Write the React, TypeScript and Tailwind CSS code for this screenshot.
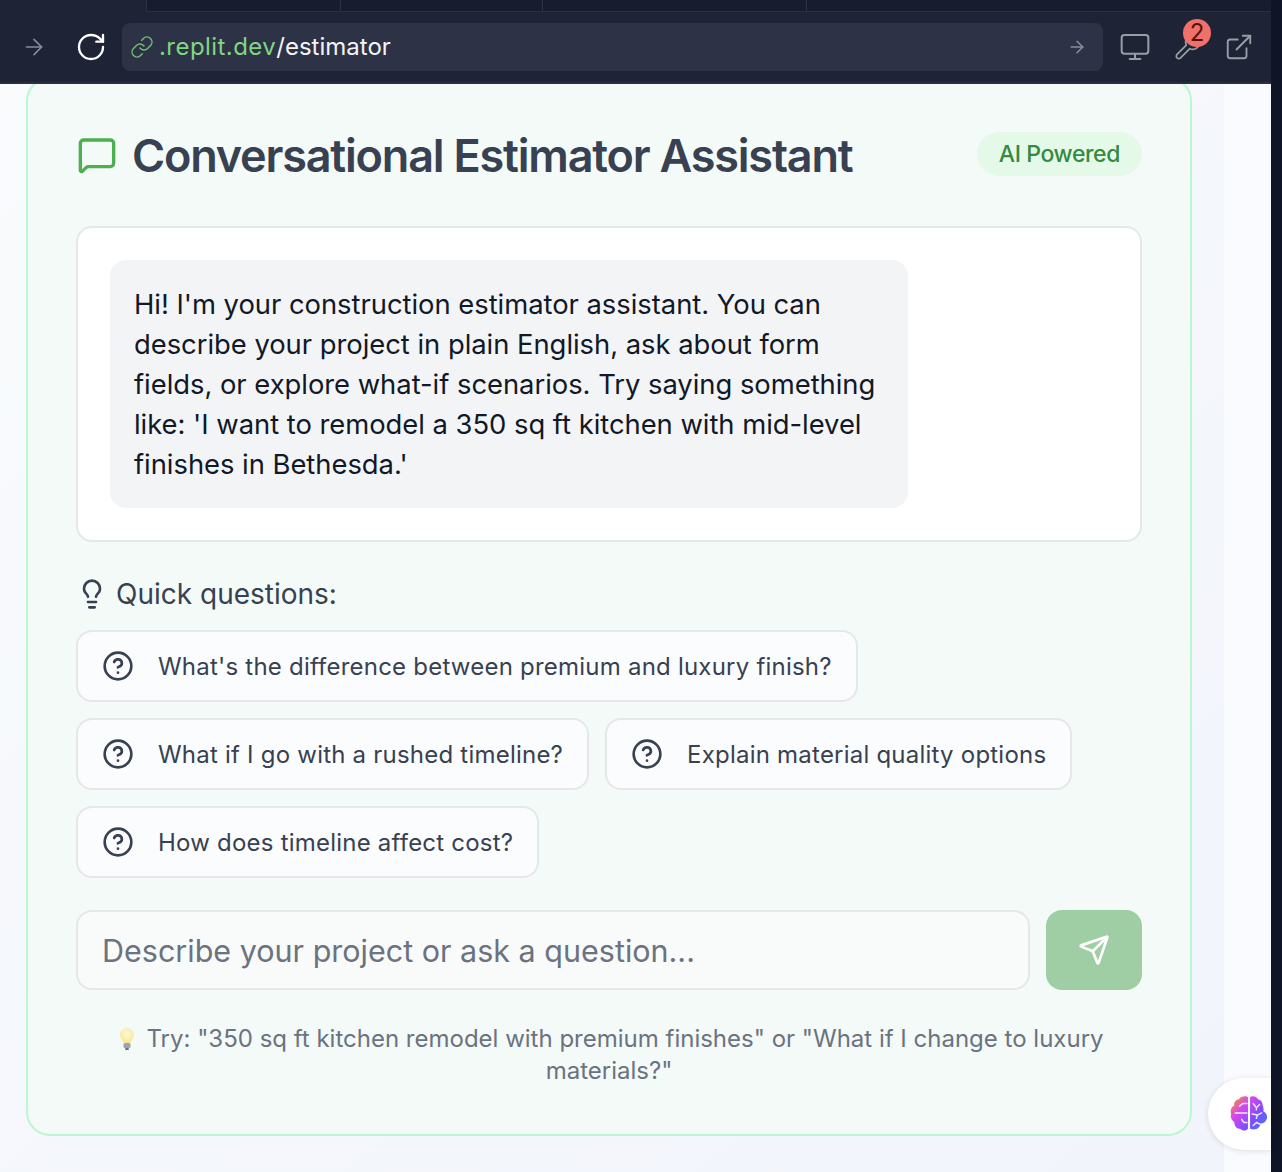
import { ArrowRight, CircleHelp, ExternalLink, Lightbulb, Link, MessageSquare, Monitor, RotateCw, Send, Wrench } from 'lucide-react';

function QuickButton({ label }: { label: string }) {
    return (
        <button className="flex h-[72px] items-center gap-[24px] rounded-2xl border-2 border-[#e5e7eb] bg-[#fbfcfd] pl-[24px] pr-[24px] pt-[2px] text-[24px] tracking-[0.22px] text-[#374151]">
            <CircleHelp className="-mt-[2px] h-[32px] w-[32px] shrink-0" strokeWidth={2} />
            {label}
        </button>
    );
}

function BrainIcon() {
    return (
        <svg width="40" height="40" viewBox="0 0 38 38" fill="none">
            <defs>
                <linearGradient id="brainGrad" x1="2" y1="4" x2="36" y2="34" gradientUnits="userSpaceOnUse">
                    <stop offset="0" stopColor="#f59e0b" />
                    <stop offset="0.3" stopColor="#d946ef" />
                    <stop offset="0.65" stopColor="#7c4dff" />
                    <stop offset="1" stopColor="#3b82f6" />
                </linearGradient>
            </defs>
            <path d="M18 3c-1.500-1.500-7-1.500-8.500 2C6 5.500 4.500 8 5 11c-3 1.500-4 5-3 8-1 3 .5 6 3 7.500C5 30 7 33 10.500 33c2.500 2.500 6 2 7.500 0z" fill="url(#brainGrad)" />
            <path d="M20 3c1.500-1.500 6-1.500 7.500 2 3 .5 4.500 3 4.500 6 1 2.500 1 4 .5 5.500 3.500 1.500 5 6 2.500 9-1 2-3 2.500-4.500 2.500C29 32 26 35 20 33z" fill="url(#brainGrad)" />
            <path d="M17 9h-4l-3 2.500M17 18H6M17 27h-3l-2-3M23 9l3 4 3-3M26 13v2M22 19l5 1 4-2M27 20l-1 3M23 30l3-3 4 2" stroke="#f3e8ff" strokeWidth="1.400" strokeLinecap="round" strokeLinejoin="round" />
        </svg>
    );
}

function BulbEmoji() {
    return (
        <svg width="16" height="24" viewBox="0 0 16 24" className="ml-[5px] mr-[11px] inline-block align-[-4px]">
            <defs>
                <radialGradient id="bulbGlow" cx="0.5" cy="0.4" r="0.6">
                    <stop offset="0" stopColor="#fffbe0" />
                    <stop offset="1" stopColor="#fbe38e" />
                </radialGradient>
            </defs>
            <path d="M8 1a7 7 0 0 0-7 7c0 3 2.500 4.500 3.500 8h7C12.500 12.500 15 11 15 8a7 7 0 0 0-7-7z" fill="url(#bulbGlow)" />
            <rect x="4.500" y="16" width="7" height="5" rx="1.500" fill="#9ca3af" />
            <rect x="6" y="21" width="4" height="2" rx="1" fill="#6b7280" />
        </svg>
    );
}

export default function App() {
    return (
        <div className="flex h-[1172px] w-[1282px] overflow-hidden bg-[#0f1426] font-['Inter',sans-serif]">
            <div className="relative flex w-[1271px] flex-col">
                {/* Tab strip */}
                <div className="flex h-[12px] shrink-0 bg-[#1e2336]">
                    <div className="w-[146px]" />
                    <div className="flex flex-1 border-b border-l border-[#2c3245] bg-[#171c2e]">
                        <div className="w-[194px] border-r border-[#2c3245]" />
                        <div className="w-[202px] border-r border-[#2c3245]" />
                        <div className="w-[264px] border-r border-[#2c3245]" />
                    </div>
                </div>

                {/* Browser bar */}
                <div className="flex h-[72px] shrink-0 items-center border-b-2 border-[#292e41] bg-[#1e2336]">
                    <ArrowRight className="ml-[21px] h-[26px] w-[26px] text-[#8b8f9a]" strokeWidth={1.5} />
                    <RotateCw className="ml-[28px] h-[32px] w-[32px] text-white" strokeWidth={1.75} />
                    <div className="ml-[15px] flex h-[48px] w-[981px] items-center rounded-lg bg-[#2d3246] pl-[8px] pr-[16px]">
                        <Link className="h-[24px] w-[24px] text-[#6fbf73]" strokeWidth={1.5} />
                        <span className="ml-[5px] flex-1 text-[24px] text-[#f3f4f6]">
                            <span className="tracking-[0.45px] text-[#7fd683]">.replit.dev</span>/estimator
                        </span>
                        <ArrowRight className="h-[20px] w-[20px] text-[#8b8f9a]" strokeWidth={1.75} />
                    </div>
                    <Monitor className="ml-[16px] h-[32px] w-[32px] text-[#9a9da6]" strokeWidth={1.5} />
                    <div className="relative ml-[23px]">
                        <Wrench className="h-[28px] w-[28px] text-[#9a9da6]" strokeWidth={1.5} />
                        <span className="absolute left-[9px] top-[-14px] flex h-[28px] w-[28px] items-center justify-center rounded-full bg-[#f0706a] text-[24px] text-[#5c0f0c]">2</span>
                    </div>
                    <ExternalLink className="ml-[22px] h-[30px] w-[30px] text-[#9a9da6]" strokeWidth={1.5} />
                </div>

                {/* Page */}
                <div className="flex-1 overflow-hidden bg-[#f9fbfe]">
                    <div className="flow-root h-full w-[1224px] bg-gradient-to-br from-[#f9fbfd] to-[#f1f4fb] pl-[26px] pr-[32px]">
                        <div className="-mt-[7px] h-[1059px] rounded-3xl border-2 border-[#bbf7d0] bg-[#f4faf8] px-[48px] pt-[48px]">
                            <div className="mb-[43px] flex h-[56px] items-center justify-between">
                                <div className="flex items-center">
                                    <MessageSquare className="ml-[1px] h-[40px] w-[40px] text-[#4caf50]" strokeWidth={2} />
                                    <h1 className="ml-[15px] mt-[2px] text-[45px] font-semibold tracking-[-1.2px] text-[#374151]">Conversational Estimator Assistant</h1>
                                </div>
                                <span className="mb-[2px] flex h-[44px] items-center rounded-full bg-[#e4f9e8] px-[22px] text-[23px] font-medium tracking-[-0.4px] text-[#358a3f]">AI Powered</span>
                            </div>

                            {/* Chat window */}
                            <div className="rounded-2xl border-2 border-[#e5e7eb] bg-white p-[32px]">
                                <div className="w-[798px] rounded-2xl bg-[#f3f4f6] p-[24px] text-[27.4px] leading-[40px] tracking-[-0.03px] text-[#111827]">
                                    Hi! I'm your construction estimator assistant. You can describe your project in plain English, ask about form fields, or explore what-if scenarios. Try saying something like: 'I want to remodel a 350 sq ft kitchen with mid-level finishes in Bethesda.'
                                </div>
                            </div>

                            <div className="mt-[32px] flex h-[40px] items-center text-[28px] text-[#374151]">
                                <Lightbulb className="h-[32px] w-[32px]" strokeWidth={2} />
                                <span className="ml-[8px]">Quick questions:</span>
                            </div>

                            <div className="mt-[16px] flex flex-col gap-[16px]">
                                <div className="flex gap-[16px]">
                                    <QuickButton label="What's the difference between premium and luxury finish?" />
                                </div>
                                <div className="flex gap-[16px]">
                                    <QuickButton label="What if I go with a rushed timeline?" />
                                    <QuickButton label="Explain material quality options" />
                                </div>
                                <div className="flex gap-[16px]">
                                    <QuickButton label="How does timeline affect cost?" />
                                </div>
                            </div>

                            <div className="mt-[32px] flex gap-[16px]">
                                <input
                                    placeholder="Describe your project or ask a question..."
                                    className="h-[80px] flex-1 rounded-2xl border-2 border-[#e5e7eb] bg-[#f9fbfb] px-[24px] text-[30.5px] placeholder:text-[#6b7280]"
                                />
                                <button className="flex h-[80px] w-[96px] items-center justify-center rounded-2xl bg-[#a0cea4]">
                                    <Send className="h-[32px] w-[32px] text-white" strokeWidth={2} />
                                </button>
                            </div>

                            <p className="mt-[33px] text-center text-[24px] leading-[32px] text-[#6b7280]">
                                <BulbEmoji />Try: "350 sq ft kitchen remodel with premium finishes" or "What if I change to luxury materials?"
                            </p>
                        </div>
                    </div>
                </div>

                {/* Floating assistant pill */}
                <div className="absolute bottom-[22px] right-0 flex h-[72px] w-[63px] items-center rounded-l-full bg-white pl-[21px] shadow-[0_1px_6px_rgba(0,0,0,0.12)]">
                    <BrainIcon />
                </div>
            </div>
            <div className="w-[11px] shrink-0" />
        </div>
    );
}
